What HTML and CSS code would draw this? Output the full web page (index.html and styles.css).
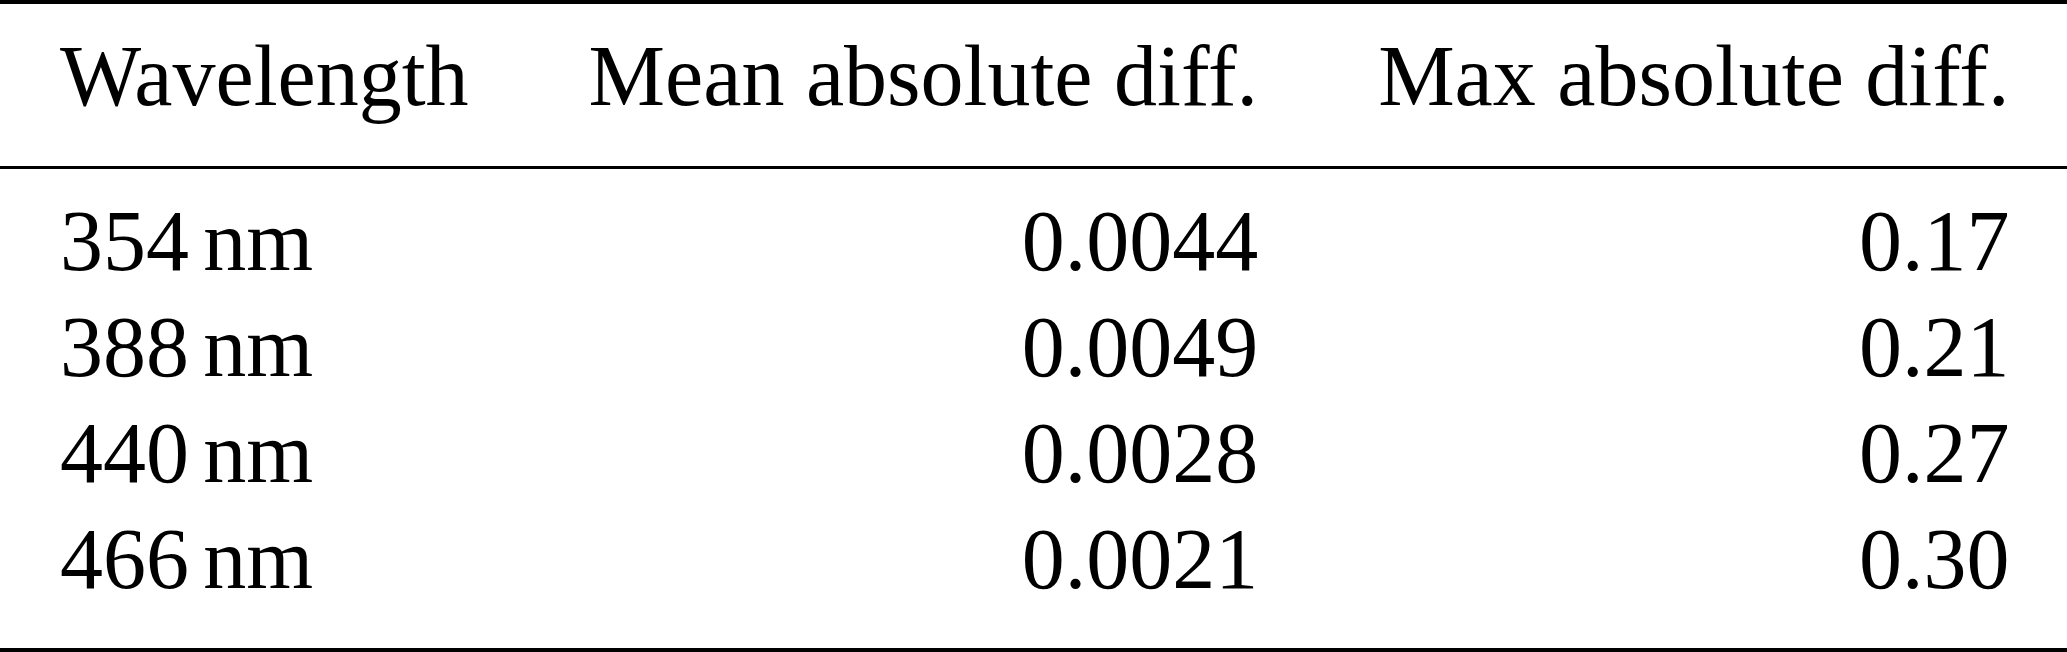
FILE: index.html
```html
<!DOCTYPE html>
<html lang="en">
<head>
<meta charset="utf-8">
<title>Wavelength differences</title>
<link rel="stylesheet" href="styles.css">
</head>
<body>
<table class="results">
  <thead>
    <tr>
      <th class="col-left">Wavelength</th>
      <th class="col-right">Mean absolute diff.</th>
      <th class="col-right">Max absolute diff.</th>
    </tr>
  </thead>
  <tbody>
    <tr class="first">
      <td class="col-left">354<span class="unit">nm</span></td>
      <td class="col-right">0.0044</td>
      <td class="col-right">0.17</td>
    </tr>
    <tr>
      <td class="col-left">388<span class="unit">nm</span></td>
      <td class="col-right">0.0049</td>
      <td class="col-right">0.21</td>
    </tr>
    <tr>
      <td class="col-left">440<span class="unit">nm</span></td>
      <td class="col-right">0.0028</td>
      <td class="col-right">0.27</td>
    </tr>
    <tr class="last">
      <td class="col-left">466<span class="unit">nm</span></td>
      <td class="col-right">0.0021</td>
      <td class="col-right">0.30</td>
    </tr>
  </tbody>
</table>
</body>
</html>
```
FILE: styles.css
```css
html, body {
  margin: 0;
  padding: 0;
  background: #ffffff;
}

.results {
  width: 100%;
  border-collapse: separate;
  border-spacing: 0;
  font-family: "Liberation Serif", "Times New Roman", serif;
  font-size: 86px;
  line-height: 106px;
  color: #000000;
}

.results th,
.results td {
  padding: 0 60px;
  font-weight: normal;
  white-space: nowrap;
}

.results th {
  border-top: 4px solid #000000;
  border-bottom: 3px solid #000000;
  padding-top: 19px;
  padding-bottom: 37px;
}

.results .first td {
  padding-top: 19px;
}

.results .last td {
  padding-bottom: 36px;
  border-bottom: 4px solid #000000;
}

.col-left {
  text-align: left;
}

.col-right {
  text-align: right;
}

.unit {
  margin-left: 0.1667em;
}
```
